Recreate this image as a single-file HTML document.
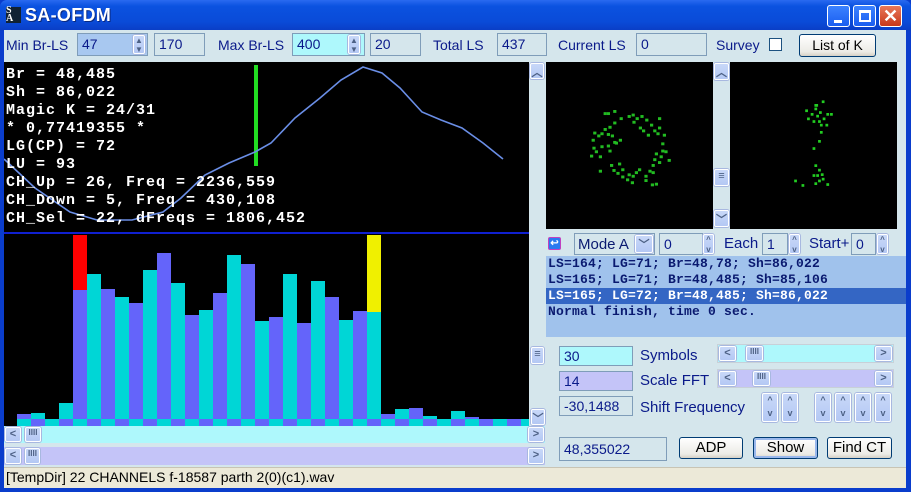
<!DOCTYPE html>
<html><head><meta charset="utf-8"><style>
*{margin:0;padding:0;box-sizing:border-box}
body{width:911px;height:492px;overflow:hidden;background:#0a3dcc;font-family:"Liberation Sans",sans-serif;position:relative}
.a{position:absolute}
.title{left:0;top:0;width:911px;height:31px;background:linear-gradient(#2a6af0,#0b52e0 20%,#0a4bd8 70%,#0a3dc4);border-radius:7px 7px 0 0}
.client{left:4px;top:30px;width:902px;height:458px;background:#d5e6ec}
.lbl{font-size:14px;color:#0a1a8a;white-space:nowrap}
.box{border:1px solid #7f9db9;background:#d5e6ec;font-size:14px;color:#0a1a8a;padding:2px 0 0 4px;white-space:nowrap}
.btn{border:1px solid #003c74;border-radius:3px;background:linear-gradient(#fff,#ecebe6 80%,#d6d0c5);font-size:14px;color:#000;text-align:center;line-height:20px}
.sb{background:linear-gradient(#c8d8f8,#b4c8f4);border:1px solid #fff;box-shadow:0 0 0 1px #a8b8e0;border-radius:2px;color:#4d6185;font-size:11px;text-align:center;font-weight:bold}
.mono{font-family:"Liberation Mono",monospace;font-weight:bold}
.wb{width:23px;height:22px;top:5px;border:1px solid #fff;border-radius:3px;background:linear-gradient(#3c82ff,#1a5ef0);color:#fff;font-weight:bold;text-align:center}
</style></head><body>
<div class="a title"></div>
<div class="a" style="left:6px;top:7px;width:15px;height:16px;background:#123;color:#fff;font-size:10px;line-height:8px;font-family:'Liberation Serif',serif;font-weight:bold">S<br>A</div>
<div class="a" style="left:25px;top:5px;color:#fff;font-size:18px;font-weight:bold;letter-spacing:0.3px;text-shadow:1px 1px #0a2a80">SA-OFDM</div>
<div class="a wb" style="left:827px"><div style="position:absolute;left:6px;top:14px;width:8px;height:3px;background:#fff"></div></div>
<div class="a wb" style="left:853px"><div style="position:absolute;left:5px;top:4px;width:12px;height:12px;border:2px solid #fff;border-top-width:3px"></div></div>
<div class="a wb" style="left:879px;background:linear-gradient(#e8785a,#c8381a);font-size:18px;line-height:20px">✕</div>
<div class="a client"></div>

<div class="a lbl" style="left:6px;top:37px">Min Br-LS</div>
<div class="a box" style="left:77px;top:33px;width:71px;height:23px;background:#a8c8f0">47</div>
<div class="a sb" style="left:133px;top:35px;width:12px;height:19px;font-size:8px;line-height:9px">▲<br>▼</div>
<div class="a box" style="left:154px;top:33px;width:51px;height:23px">170</div>
<div class="a lbl" style="left:218px;top:37px">Max Br-LS</div>
<div class="a box" style="left:292px;top:33px;width:73px;height:23px;background:#aef8fc">400</div>
<div class="a sb" style="left:348px;top:35px;width:12px;height:19px;font-size:8px;line-height:9px">▲<br>▼</div>
<div class="a box" style="left:370px;top:33px;width:51px;height:23px">20</div>
<div class="a lbl" style="left:433px;top:37px">Total LS</div>
<div class="a box" style="left:497px;top:33px;width:50px;height:23px">437</div>
<div class="a lbl" style="left:558px;top:37px">Current LS</div>
<div class="a box" style="left:636px;top:33px;width:71px;height:23px">0</div>
<div class="a lbl" style="left:716px;top:37px">Survey</div>
<div class="a" style="left:769px;top:38px;width:13px;height:13px;border:1px solid #1c5180;background:#fff"></div>
<div class="a btn" style="left:799px;top:34px;width:77px;height:23px">List of K</div>

<svg class="a" style="left:4px;top:62px" width="525" height="172">
<rect width="525" height="172" fill="#000"/>
<rect x="0" y="170" width="525" height="2" fill="#1020d0"/>
<rect x="250" y="3" width="4" height="101" fill="#22dd22"/>
<polyline fill="none" stroke="#6a8ee6" stroke-width="1.6" points="0,97 31,126 66,150 93,158 128,158 159,150 177,136 201,113 225,101 251,90 267,81 291,56 316,36 337,18 359,5 378,11 396,26 418,50 437,58 458,66 479,81 499,97"/>
<g class="mono" fill="#fff" font-size="15" font-family="Liberation Mono" font-weight="bold" letter-spacing="1">
<text x="2" y="16">Br = 48,485</text>
<text x="2" y="34">Sh = 86,022</text>
<text x="2" y="52">Magic K = 24/31</text>
<text x="2" y="70">* 0,77419355 *</text>
<text x="2" y="88">LG(CP) = 72</text>
<text x="2" y="106">LU = 93</text>
<text x="2" y="124">CH_Up = 26, Freq = 2236,559</text>
<text x="2" y="142">CH_Down = 5, Freq = 430,108</text>
<text x="2" y="160">CH_Sel = 22, dFreqs = 1806,452</text>
</g></svg>

<svg class="a" style="left:4px;top:234px" width="525" height="192">
<rect width="525" height="192" fill="#000"/>
<g transform="translate(-4,-234)">
<rect x="17" y="414" width="14" height="5" fill="#6464fa"/><rect x="17" y="419" width="14" height="7" fill="#00d6d6"/>
<rect x="31" y="413" width="14" height="6" fill="#00d6d6"/><rect x="31" y="419" width="14" height="7" fill="#6464fa"/>
<rect x="45" y="419" width="14" height="7" fill="#00d6d6"/>
<rect x="59" y="403" width="14" height="16" fill="#00d6d6"/><rect x="59" y="419" width="14" height="7" fill="#6464fa"/>
<rect x="73" y="235" width="14" height="55" fill="#ff0000"/><rect x="73" y="290" width="14" height="129" fill="#6464fa"/><rect x="73" y="419" width="14" height="7" fill="#00d6d6"/>
<rect x="87" y="274" width="14" height="145" fill="#00d6d6"/><rect x="87" y="419" width="14" height="7" fill="#6464fa"/>
<rect x="101" y="289" width="14" height="130" fill="#6464fa"/><rect x="101" y="419" width="14" height="7" fill="#00d6d6"/>
<rect x="115" y="297" width="14" height="122" fill="#00d6d6"/><rect x="115" y="419" width="14" height="7" fill="#6464fa"/>
<rect x="129" y="303" width="14" height="116" fill="#6464fa"/><rect x="129" y="419" width="14" height="7" fill="#00d6d6"/>
<rect x="143" y="270" width="14" height="149" fill="#00d6d6"/><rect x="143" y="419" width="14" height="7" fill="#6464fa"/>
<rect x="157" y="253" width="14" height="166" fill="#6464fa"/><rect x="157" y="419" width="14" height="7" fill="#00d6d6"/>
<rect x="171" y="283" width="14" height="136" fill="#00d6d6"/><rect x="171" y="419" width="14" height="7" fill="#6464fa"/>
<rect x="185" y="315" width="14" height="104" fill="#6464fa"/><rect x="185" y="419" width="14" height="7" fill="#00d6d6"/>
<rect x="199" y="310" width="14" height="109" fill="#00d6d6"/><rect x="199" y="419" width="14" height="7" fill="#6464fa"/>
<rect x="213" y="293" width="14" height="126" fill="#6464fa"/><rect x="213" y="419" width="14" height="7" fill="#00d6d6"/>
<rect x="227" y="255" width="14" height="164" fill="#00d6d6"/><rect x="227" y="419" width="14" height="7" fill="#6464fa"/>
<rect x="241" y="264" width="14" height="155" fill="#6464fa"/><rect x="241" y="419" width="14" height="7" fill="#00d6d6"/>
<rect x="255" y="321" width="14" height="98" fill="#00d6d6"/><rect x="255" y="419" width="14" height="7" fill="#6464fa"/>
<rect x="269" y="317" width="14" height="102" fill="#6464fa"/><rect x="269" y="419" width="14" height="7" fill="#00d6d6"/>
<rect x="283" y="274" width="14" height="145" fill="#00d6d6"/><rect x="283" y="419" width="14" height="7" fill="#6464fa"/>
<rect x="297" y="323" width="14" height="96" fill="#6464fa"/><rect x="297" y="419" width="14" height="7" fill="#00d6d6"/>
<rect x="311" y="281" width="14" height="138" fill="#00d6d6"/><rect x="311" y="419" width="14" height="7" fill="#6464fa"/>
<rect x="325" y="297" width="14" height="122" fill="#6464fa"/><rect x="325" y="419" width="14" height="7" fill="#00d6d6"/>
<rect x="339" y="320" width="14" height="99" fill="#00d6d6"/><rect x="339" y="419" width="14" height="7" fill="#6464fa"/>
<rect x="353" y="311" width="14" height="108" fill="#6464fa"/><rect x="353" y="419" width="14" height="7" fill="#00d6d6"/>
<rect x="367" y="235" width="14" height="77" fill="#f0f000"/><rect x="367" y="312" width="14" height="107" fill="#00d6d6"/><rect x="367" y="419" width="14" height="7" fill="#6464fa"/>
<rect x="381" y="414" width="14" height="5" fill="#6464fa"/><rect x="381" y="419" width="14" height="7" fill="#00d6d6"/>
<rect x="395" y="409" width="14" height="10" fill="#00d6d6"/><rect x="395" y="419" width="14" height="7" fill="#6464fa"/>
<rect x="409" y="408" width="14" height="11" fill="#6464fa"/><rect x="409" y="419" width="14" height="7" fill="#00d6d6"/>
<rect x="423" y="416" width="14" height="3" fill="#00d6d6"/><rect x="423" y="419" width="14" height="7" fill="#6464fa"/>
<rect x="437" y="419" width="14" height="7" fill="#00d6d6"/>
<rect x="451" y="411" width="14" height="8" fill="#00d6d6"/><rect x="451" y="419" width="14" height="7" fill="#6464fa"/>
<rect x="465" y="417" width="14" height="2" fill="#6464fa"/><rect x="465" y="419" width="14" height="7" fill="#00d6d6"/>
<rect x="479" y="419" width="14" height="7" fill="#6464fa"/>
<rect x="493" y="419" width="14" height="7" fill="#00d6d6"/>
<rect x="507" y="419" width="14" height="7" fill="#6464fa"/>
<rect x="521" y="419" width="14" height="7" fill="#00d6d6"/>
</g></svg>

<div class="a sb" style="left:530px;top:63px;width:14px;height:16px">︿</div>
<div class="a sb" style="left:531px;top:347px;width:13px;height:17px">≡</div>
<div class="a sb" style="left:531px;top:409px;width:14px;height:16px">﹀</div>
<div class="a" style="left:4px;top:426px;width:541px;height:17px;background:#aef8fc"></div>
<div class="a sb" style="left:5px;top:427px;width:16px;height:15px">&lt;</div>
<div class="a sb" style="left:25px;top:427px;width:16px;height:15px;font-size:8px">IIII</div>
<div class="a sb" style="left:528px;top:427px;width:16px;height:15px">&gt;</div>
<div class="a" style="left:4px;top:447px;width:541px;height:18px;background:#c4c4f8"></div>
<div class="a sb" style="left:5px;top:448px;width:16px;height:16px">&lt;</div>
<div class="a sb" style="left:25px;top:448px;width:15px;height:16px;font-size:8px">IIII</div>
<div class="a sb" style="left:528px;top:448px;width:16px;height:16px">&gt;</div>

<svg class="a" style="left:546px;top:62px" width="351" height="167">
<rect width="167" height="167" fill="#000"/>
<rect x="184" width="167" height="167" fill="#000"/>
<g fill="#22bb22" transform="translate(22.4,15.6) scale(0.8,0.72)">
<rect x="44" y="48" width="4" height="4"/><rect x="48" y="48" width="4" height="4"/><rect x="56" y="45" width="4" height="4"/><rect x="64" y="55" width="4" height="4"/><rect x="74" y="52" width="4" height="4"/><rect x="79" y="50" width="4" height="4"/><rect x="84" y="55" width="4" height="4"/><rect x="80" y="60" width="4" height="4"/><rect x="90" y="52" width="4" height="4"/><rect x="96" y="57" width="4" height="4"/><rect x="102" y="64" width="4" height="4"/><rect x="112" y="55" width="4" height="4"/><rect x="88" y="68" width="4" height="4"/><rect x="92" y="72" width="4" height="4"/><rect x="106" y="72" width="4" height="4"/><rect x="112" y="68" width="4" height="4"/><rect x="110" y="76" width="4" height="4"/><rect x="118" y="78" width="4" height="4"/><rect x="98" y="78" width="4" height="4"/><rect x="56" y="61" width="4" height="4"/><rect x="50" y="67" width="4" height="4"/><rect x="44" y="70" width="4" height="4"/><rect x="40" y="76" width="4" height="4"/><rect x="36" y="79" width="4" height="4"/><rect x="48" y="77" width="4" height="4"/><rect x="53" y="79" width="4" height="4"/><rect x="56" y="88" width="4" height="4"/><rect x="31" y="75" width="4" height="4"/><rect x="29" y="85" width="4" height="4"/><rect x="30" y="96" width="4" height="4"/><rect x="40" y="94" width="4" height="4"/><rect x="48" y="93" width="4" height="4"/><rect x="33" y="101" width="4" height="4"/><rect x="38" y="108" width="4" height="4"/><rect x="50" y="100" width="4" height="4"/><rect x="58" y="89" width="4" height="4"/><rect x="63" y="85" width="4" height="4"/><rect x="27" y="107" width="4" height="4"/><rect x="52" y="120" width="4" height="4"/><rect x="55" y="127" width="4" height="4"/><rect x="60" y="131" width="4" height="4"/><rect x="66" y="126" width="4" height="4"/><rect x="74" y="133" width="4" height="4"/><rect x="79" y="135" width="4" height="4"/><rect x="83" y="130" width="4" height="4"/><rect x="87" y="126" width="4" height="4"/><rect x="78" y="144" width="4" height="4"/><rect x="72" y="140" width="4" height="4"/><rect x="66" y="136" width="4" height="4"/><rect x="95" y="141" width="4" height="4"/><rect x="103" y="147" width="4" height="4"/><rect x="95" y="135" width="4" height="4"/><rect x="116" y="100" width="4" height="4"/><rect x="112" y="116" width="4" height="4"/><rect x="108" y="104" width="4" height="4"/><rect x="106" y="112" width="4" height="4"/><rect x="114" y="108" width="4" height="4"/><rect x="120" y="101" width="4" height="4"/><rect x="124" y="113" width="4" height="4"/><rect x="104" y="120" width="4" height="4"/><rect x="116" y="90" width="4" height="4"/><rect x="104" y="130" width="4" height="4"/><rect x="100" y="128" width="4" height="4"/><rect x="62" y="118" width="4" height="4"/><rect x="38" y="128" width="4" height="4"/><rect x="108" y="146" width="4" height="4"/>
</g>
<g fill="#22cc22" transform="translate(20,6) scale(0.92,0.9)">
<rect x="278" y="36" width="3" height="3"/><rect x="260" y="46" width="3" height="3"/><rect x="266" y="50" width="3" height="3"/><rect x="270" y="44" width="3" height="3"/><rect x="272" y="52" width="3" height="3"/><rect x="275" y="48" width="3" height="3"/><rect x="268" y="58" width="3" height="3"/><rect x="274" y="58" width="3" height="3"/><rect x="279" y="55" width="3" height="3"/><rect x="283" y="50" width="3" height="3"/><rect x="287" y="50" width="3" height="3"/><rect x="276" y="62" width="3" height="3"/><rect x="282" y="62" width="3" height="3"/><rect x="276" y="70" width="3" height="3"/><rect x="270" y="40" width="3" height="3"/><rect x="262" y="55" width="3" height="3"/><rect x="268" y="88" width="3" height="3"/><rect x="274" y="80" width="3" height="3"/><rect x="271" y="40" width="3" height="3"/>
<rect x="270" y="107" width="3" height="3"/><rect x="274" y="112" width="3" height="3"/><rect x="268" y="118" width="3" height="3"/><rect x="272" y="118" width="3" height="3"/><rect x="277" y="117" width="3" height="3"/><rect x="274" y="124" width="3" height="3"/><rect x="278" y="122" width="3" height="3"/><rect x="283" y="128" width="3" height="3"/><rect x="270" y="127" width="3" height="3"/><rect x="248" y="124" width="3" height="3"/><rect x="256" y="129" width="3" height="3"/>
</g></svg>
<div class="a sb" style="left:714px;top:63px;width:15px;height:17px">︿</div>
<div class="a sb" style="left:714px;top:169px;width:15px;height:17px">≡</div>
<div class="a sb" style="left:714px;top:210px;width:15px;height:17px">﹀</div>

<div class="a" style="left:548px;top:237px;width:13px;height:13px;background:#2a7af0;border:1px solid #c040c0;border-radius:2px;color:#fff;font-size:10px;text-align:center;line-height:11px;font-weight:bold">↩</div>
<div class="a box" style="left:574px;top:233px;width:81px;height:22px;font-size:15px;color:#0a1a70;padding-left:3px">Mode A</div>
<div class="a sb" style="left:635px;top:235px;width:18px;height:18px">﹀</div>
<div class="a box" style="left:659px;top:233px;width:44px;height:22px">0</div>
<div class="a sb" style="left:703px;top:234px;width:11px;height:20px;font-size:8px;line-height:10px">^<br>v</div>
<div class="a lbl" style="left:724px;top:235px;font-size:15px">Each</div>
<div class="a box" style="left:762px;top:233px;width:26px;height:22px">1</div>
<div class="a sb" style="left:789px;top:234px;width:11px;height:20px;font-size:8px;line-height:10px">^<br>v</div>
<div class="a lbl" style="left:809px;top:235px;font-size:15px">Start+</div>
<div class="a box" style="left:851px;top:233px;width:25px;height:22px">0</div>
<div class="a sb" style="left:877px;top:234px;width:11px;height:20px;font-size:8px;line-height:10px">^<br>v</div>

<div class="a" style="left:546px;top:256px;width:360px;height:81px;background:#a0c2ec"></div>
<div class="a" style="left:546px;top:288px;width:360px;height:16px;background:#3466c4"></div>
<div class="a mono" style="left:548px;top:256px;font-size:13px;line-height:16px;color:#0a1a70;letter-spacing:0.2px;white-space:pre">LS=164; LG=71; Br=48,78; Sh=86,022
LS=165; LG=71; Br=48,485; Sh=85,106
<span style="color:#fff">LS=165; LG=72; Br=48,485; Sh=86,022</span>
Normal finish, time 0 sec.</div>

<div class="a box" style="left:559px;top:346px;width:74px;height:20px;background:#aef8fc;padding-top:1px">30</div>
<div class="a lbl" style="left:640px;top:347px;font-size:15px">Symbols</div>
<div class="a" style="left:717px;top:344px;width:177px;height:19px;background:#aef8fc;border:1px solid #c8d0d8"></div>
<div class="a sb" style="left:719px;top:346px;width:17px;height:15px">&lt;</div>
<div class="a sb" style="left:746px;top:346px;width:17px;height:15px;font-size:8px">IIII</div>
<div class="a sb" style="left:875px;top:346px;width:17px;height:15px">&gt;</div>
<div class="a box" style="left:559px;top:371px;width:74px;height:20px;background:#c4c4f8;padding-top:1px">14</div>
<div class="a lbl" style="left:640px;top:372px;font-size:15px">Scale FFT</div>
<div class="a" style="left:717px;top:369px;width:177px;height:19px;background:#c4c4f8;border:1px solid #c8d0d8"></div>
<div class="a sb" style="left:719px;top:371px;width:17px;height:15px">&lt;</div>
<div class="a sb" style="left:753px;top:371px;width:17px;height:15px;font-size:8px">IIII</div>
<div class="a sb" style="left:875px;top:371px;width:17px;height:15px">&gt;</div>
<div class="a box" style="left:559px;top:396px;width:74px;height:20px;padding-top:1px">-30,1488</div>
<div class="a lbl" style="left:640px;top:399px;font-size:15px">Shift Frequency</div>
<div class="a sb" style="left:762px;top:393px;width:16px;height:29px;font-size:9px;line-height:13px">^<br>v</div>
<div class="a sb" style="left:782px;top:393px;width:16px;height:29px;font-size:9px;line-height:13px">^<br>v</div>
<div class="a sb" style="left:815px;top:393px;width:16px;height:29px;font-size:9px;line-height:13px">^<br>v</div>
<div class="a sb" style="left:835px;top:393px;width:16px;height:29px;font-size:9px;line-height:13px">^<br>v</div>
<div class="a sb" style="left:855px;top:393px;width:16px;height:29px;font-size:9px;line-height:13px">^<br>v</div>
<div class="a sb" style="left:875px;top:393px;width:16px;height:29px;font-size:9px;line-height:13px">^<br>v</div>
<div class="a box" style="left:559px;top:437px;width:108px;height:24px;padding-top:3px">48,355022</div>
<div class="a btn" style="left:679px;top:437px;width:64px;height:22px;font-size:15px">ADP</div>
<div class="a btn" style="left:753px;top:437px;width:65px;height:22px;font-size:15px;box-shadow:inset 0 0 0 2px #9ab8ec">Show</div>
<div class="a btn" style="left:827px;top:437px;width:65px;height:22px;font-size:15px">Find CT</div>

<div class="a" style="left:4px;top:467px;width:902px;height:21px;background:#ece9d8;border-top:1px solid #c8c4b4"></div>
<div class="a" style="left:6px;top:469px;font-size:14px;color:#000;white-space:nowrap">[TempDir] 22 CHANNELS f-18587 parth 2(0)(c1).wav</div>
</body></html>
